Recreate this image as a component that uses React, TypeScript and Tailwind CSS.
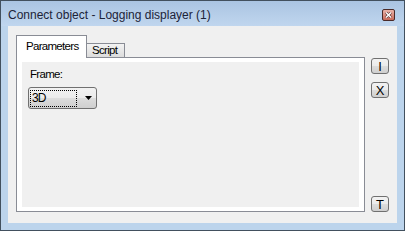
// App.tsx - Connect object dialog (Logging displayer)
import React from 'react';

const btnFace =
  'bg-[linear-gradient(to_bottom,#f2f2f2_0%,#ebebeb_50%,#dddddd_50%,#cfcfcf_100%)] border border-[#707070] rounded-[3px]';

const SideButton: React.FC<{ label: string; className?: string }> = ({ label, className = '' }) => (
  <div
    className={`${btnFace} w-[18px] h-[16px] flex items-center justify-center text-[13px] leading-none text-black font-['Liberation_Sans',Arial,sans-serif] font-light ${className}`}
  >
    {label}
  </div>
);

export default function App() {
  return (
    <div className="w-[405px] h-[231px] border border-[#42505e] bg-[#bcd4ec] flex flex-col font-['Liberation_Sans',Arial,sans-serif] overflow-hidden">
      {/* 标题栏 */}
      <div className="h-[25px] flex items-center pl-[7px] pr-[9px] bg-[linear-gradient(to_bottom,#aac4e2,#c0d6ee)]">
        <span className="text-[12px] leading-[14px] text-[#1c2338] mt-[3px]">
          Connect object - Logging displayer (1)
        </span>
        <div className="ml-auto mt-[2px] w-[13px] h-[12px] border border-[#4a2a28] rounded-[2px] bg-[linear-gradient(to_bottom,#eab3a9,#c86a5a)] flex items-center justify-center">
          <svg width="7" height="6" viewBox="0 0 7 6">
            <path d="M1 0.5 L6 5.5 M6 0.5 L1 5.5" stroke="#5a3030" strokeWidth="2.6" />
            <path d="M1 0.5 L6 5.5 M6 0.5 L1 5.5" stroke="#ffffff" strokeWidth="1.5" />
          </svg>
        </div>
      </div>

      {/* 客户区 */}
      <div className="mx-[7px] mb-[7px] flex-1 bg-[#f0f0f0] flex pl-[8px] pt-[9px] pb-[11px]">
        <div className="w-[349px] flex flex-col">
          {/* 选项卡 */}
          <div className="flex items-end h-[22px]">
            <div className="relative z-10 -mb-px w-[71px] h-[23px] bg-white border border-b-0 border-[#898c95] pl-[9px] pt-[4px] text-[11.5px] leading-[13px] tracking-[-0.7px] text-black">
              Parameters
            </div>
            <div className="-ml-px w-[39px] h-[14px] border border-b-0 border-[#898c95] bg-[linear-gradient(to_bottom,#f3f3f3,#dcdcdc)] pl-[5px] text-[11.5px] leading-[13px] tracking-[-0.7px] text-black">
              Script
            </div>
          </div>
          {/* 选项卡面板 */}
          <div className="flex-1 border border-[#898c95] bg-white px-[5px] py-[4px] flex">
            <div className="flex-1 bg-[#f0f0f0] flex flex-col items-start">
              <span className="mt-[6px] ml-[8px] text-[11.5px] leading-[13px] tracking-[-0.7px] text-black">
                Frame:
              </span>
              <div className={`${btnFace} mt-[6px] ml-[6px] w-[69px] h-[22px] flex items-center pl-[1px]`}>
                <div className="w-[47px] h-[17px] border border-dotted border-black flex items-center pl-[1px] text-[12px] leading-[13px] tracking-[-1px] text-black">
                  3D
                </div>
                <svg className="ml-[8px]" width="7" height="4" viewBox="0 0 7 4">
                  <path d="M0 0 H7 L3.5 4 Z" fill="#000" />
                </svg>
              </div>
            </div>
          </div>
        </div>

        {/* 右侧按钮 */}
        <div className="ml-[6px] flex flex-col pt-[23px]">
          <SideButton label="I" />
          <SideButton label="X" className="mt-[8px]" />
          <SideButton label="T" className="mt-auto" />
        </div>
      </div>
    </div>
  );
}
